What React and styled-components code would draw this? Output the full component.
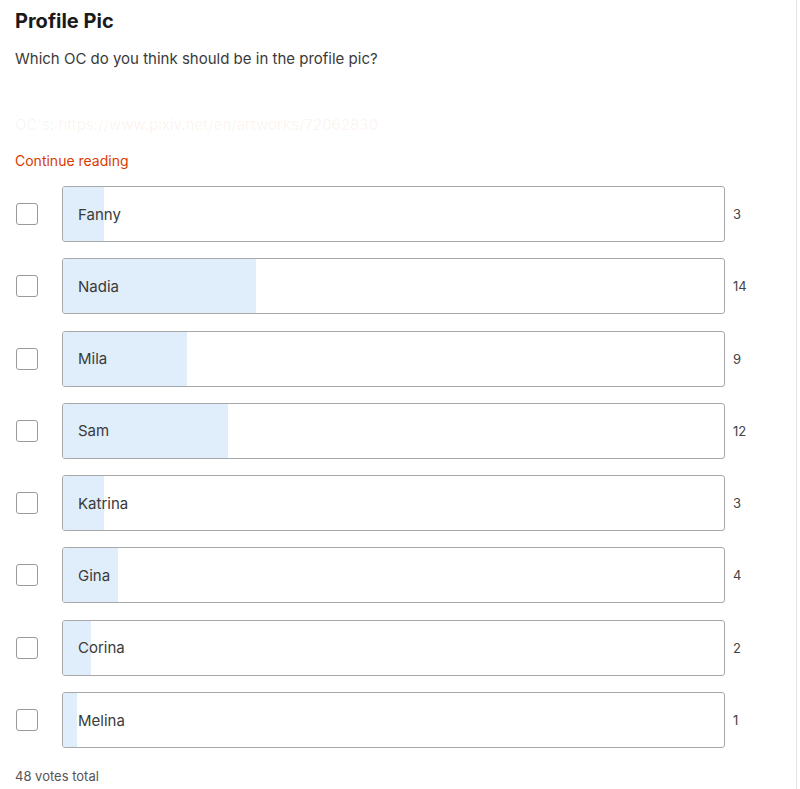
import styled, { createGlobalStyle } from 'styled-components';

const Global = createGlobalStyle`
  html, body {
    margin: 0;
    padding: 0;
    background: #fff;
  }
  body {
    font-family: Inter, "Noto Sans", sans-serif;
    color: #1c1c1c;
  }
`;

const Page = styled.div`
  width: 797px;
  height: 789px;
  box-sizing: border-box;
  border-right: 1px solid #e4e4e4;
  padding: 0 0 0 15px;
  overflow: hidden;
`;

const Title = styled.h1`
  margin: 8px 0 0;
  font-size: 20px;
  line-height: 26px;
  font-weight: 700;
  color: #1a1a1b;
`;

const Body = styled.p`
  margin: 15px 0 0;
  font-size: 15px;
  line-height: 20px;
  color: #3a3a3a;
`;

const Faded = styled.p`
  margin: 46px 0 0;
  font-size: 15px;
  line-height: 20px;
  color: rgba(40, 40, 40, 0.06);
  white-space: nowrap;

  span {
    color: rgba(214, 80, 30, 0.08);
  }
`;

const ReadMore = styled.a`
  display: block;
  margin-top: 17px;
  font-size: 14px;
  line-height: 18px;
  color: #d93a00;
  text-decoration: none;
`;

const Options = styled.div`
  display: flex;
  flex-direction: column;
  gap: 16.3px;
  margin-top: 16px;
`;

const Row = styled.label`
  display: flex;
  align-items: center;
  height: 56px;
`;

const Check = styled.span`
  width: 22px;
  height: 22px;
  box-sizing: border-box;
  border: 1px solid #9a9a9a;
  border-radius: 3px;
  margin-left: 1px;
  flex: none;
`;

const Bar = styled.div`
  position: relative;
  margin-left: 24px;
  width: 663px;
  height: 56px;
  box-sizing: border-box;
  border: 1px solid #a8a8a8;
  border-radius: 3px;
  display: flex;
  align-items: center;
  overflow: hidden;
`;

const Fill = styled.div`
  position: absolute;
  left: 0;
  top: 0;
  bottom: 0;
  background: #e0edfa;
`;

const Label = styled.span`
  position: relative;
  padding-left: 15px;
  font-size: 15px;
  color: #3a3a3a;
`;

const Count = styled.span`
  margin-left: 8px;
  font-size: 13px;
  color: #444;
`;

const Total = styled.div`
  margin-top: 20px;
  font-size: 13px;
  color: #555;
`;

const options = [
  ['Fanny', 3],
  ['Nadia', 14],
  ['Mila', 9],
  ['Sam', 12],
  ['Katrina', 3],
  ['Gina', 4],
  ['Corina', 2],
  ['Melina', 1],
];

export default function App() {
  const total = options.reduce((s, [, v]) => s + v, 0);
  return (
    <>
      <Global />
      <Page>
        <Title>Profile Pic</Title>
        <Body>Which OC do you think should be in the profile pic?</Body>
        <Faded>
          OC's: <span>https://www.pixiv.net/en/artworks/72062830</span>
        </Faded>
        <ReadMore href="#">Continue reading</ReadMore>
        <Options>
          {options.map(([name, votes]) => (
            <Row key={name}>
              <Check />
              <Bar>
                <Fill style={{ width: `${(votes / total) * 100}%` }} />
                <Label>{name}</Label>
              </Bar>
              <Count>{votes}</Count>
            </Row>
          ))}
        </Options>
        <Total>{total} votes total</Total>
      </Page>
    </>
  );
}
